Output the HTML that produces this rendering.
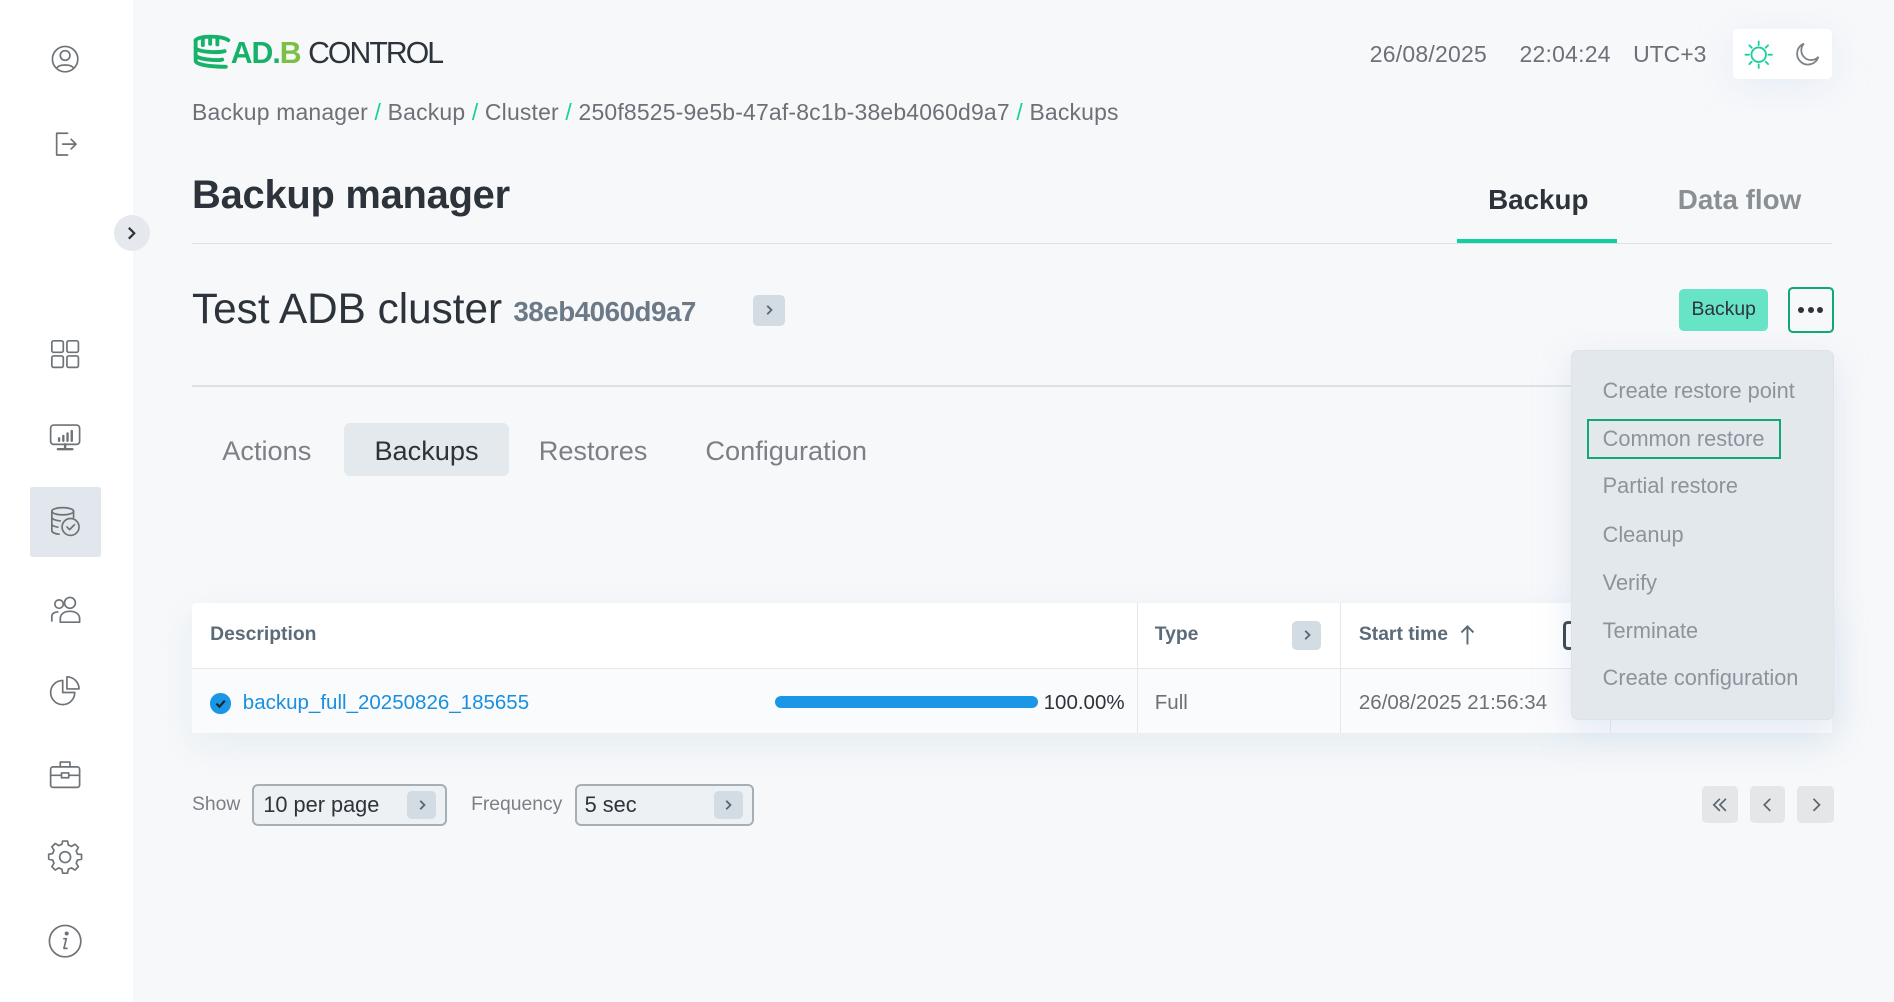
<!DOCTYPE html>
<html><head><meta charset="utf-8">
<style>
*{box-sizing:border-box;margin:0;padding:0}
html,body{width:1894px;height:1002px;overflow:hidden;background:#f7f8fa}
#w{width:1568px;height:830px;zoom:1.2079;position:relative;font-family:"Liberation Sans",sans-serif;background:#f7f8fa;overflow:hidden}
.a{position:absolute;white-space:nowrap}
.side{left:0;top:0;width:110px;height:830px;background:#fff}
.ic{position:absolute;left:39px;width:30px;height:30px}
.ic svg{width:30px;height:30px;fill:none;stroke:#6e7378;stroke-width:1.4;stroke-linecap:round;stroke-linejoin:round}
.gray{color:#6b7177}
.chev{background:#d3dce3;border-radius:4px;display:flex;align-items:center;justify-content:center}
.chev svg{width:10px;height:10px;fill:none;stroke:#5a6570;stroke-width:1.5}
.mi{position:absolute;left:25px;font-size:18px;color:#8b949c}
</style></head><body><div id="w">
<div class="a side"></div>
<div class="ic" style="top:34px"><svg viewBox="0 0 30 30"><circle cx="15" cy="15" r="10.5"/><circle cx="15" cy="12" r="4"/><path d="M8 22.5c2-3.5 12-3.5 14 0"/></svg></div>
<div class="ic" style="top:104px"><svg viewBox="0 0 30 30"><path d="M17 6H8v18h9M8 6v18M13 15h11M20 11l4 4-4 4"/></svg></div>
<div class="a" style="left:94px;top:178px;width:30px;height:30px;border-radius:50%;background:#e5e9ee;display:flex;align-items:center;justify-content:center"><svg width="12" height="12" viewBox="0 0 12 12"><path d="M4 1.5l4.5 4.5L4 10.5" fill="none" stroke="#2c333a" stroke-width="1.8"/></svg></div>
<div class="ic" style="top:278px"><svg viewBox="0 0 30 30"><rect x="4" y="4" width="9.5" height="9.5" rx="1.5"/><rect x="16.5" y="4" width="9.5" height="9.5" rx="1.5"/><rect x="4" y="16.5" width="9.5" height="9.5" rx="1.5"/><rect x="16.5" y="16.5" width="9.5" height="9.5" rx="1.5"/></svg></div>
<div class="ic" style="top:347px"><svg viewBox="0 0 30 30"><rect x="3" y="5" width="24" height="16" rx="2.5"/><path d="M9 25h12M15 21v4M10 18v-2M13.5 18v-4M17 18v-6M20.5 18v-8" stroke-width="2"/></svg></div>
<div class="a" style="left:25px;top:403px;width:59px;height:58px;background:#e1e7ec;border-radius:2px"></div>
<div class="ic" style="top:417px"><svg viewBox="0 0 30 30"><ellipse cx="13" cy="6" rx="9" ry="3"/><path d="M4 6v16c0 1.5 2.5 2.6 6 3M22 6v5M4 11c0 1.5 3 2.7 7 3M4 16.5c0 1.2 2 2.2 5 2.7"/><circle cx="19.5" cy="19" r="7"/><path d="M16.5 19l2.2 2.2 4-4"/></svg></div>
<div class="ic" style="top:490px"><svg viewBox="0 0 30 30"><circle cx="10" cy="10" r="3.5"/><circle cx="19" cy="9" r="4.5"/><path d="M4 24v-4c0-2 2-3.5 5-3.5M11 25v-3c0-4 3.5-6 8-6s8 2 8 6v3z"/></svg></div>
<div class="ic" style="top:556px"><svg viewBox="0 0 30 30"><path d="M13 7a10 10 0 1 0 10 10H13z"/><path d="M16.5 4v10h10A10 10 0 0 0 16.5 4z"/></svg></div>
<div class="ic" style="top:626px"><svg viewBox="0 0 30 30"><rect x="3" y="9" width="24" height="17" rx="2"/><path d="M11 9V5h8v4M3 16h24"/><rect x="12" y="14" width="6" height="4" fill="#fff"/></svg></div>
<div class="ic" style="top:695px"><svg viewBox="0 0 30 30"><path d="M13 3h4l.7 3.3 2.6 1.1 2.9-1.8 2.8 2.8-1.8 2.9 1.1 2.6L28.6 14v4l-3.3.7-1.1 2.6 1.8 2.9-2.8 2.8-2.9-1.8-2.6 1.1L17 29.6h-4l-.7-3.3-2.6-1.1-2.9 1.8-2.8-2.8 1.8-2.9-1.1-2.6L1.4 18v-4l3.3-.7 1.1-2.6-1.8-2.9 2.8-2.8 2.9 1.8 2.6-1.1z" transform="translate(0 -1.3)"/><circle cx="15" cy="15" r="4.5"/></svg></div>
<div class="ic" style="top:764px"><svg viewBox="0 0 30 30"><circle cx="15" cy="15" r="13"/><circle cx="16.3" cy="8.7" r="1" fill="#6e7378"/><path d="M14 13h2l-2 8h2.5"/></svg></div>

<svg class="a" style="left:159px;top:27px" width="36" height="32" viewBox="0 0 36 32"><g fill="none" stroke="#17b26a" stroke-width="3.2" stroke-linecap="round"><path d="M3 6c3-4 22-4 27 0"/><path d="M3 6v17c0 5 25 5 25 5"/><path d="M3 12c0 4 20 4.5 24 3M3 18c0 4 18 5 22 4"/><path d="M9 5v5M15 4v5M21 4.5v5"/></g></svg>
<div class="a" style="left:191px;top:31px;font-size:25px;font-weight:bold;letter-spacing:-0.8px"><span style="color:#17b26a">AD.</span><span style="color:#7bc043">B</span> <span style="color:#2c333a;font-weight:normal;letter-spacing:-1.6px">CONTROL</span></div>

<div class="a gray" style="left:1134px;top:34px;font-size:19px;letter-spacing:0.2px">26/08/2025</div>
<div class="a gray" style="left:1258px;top:34px;font-size:19px;letter-spacing:0.2px">22:04:24</div>
<div class="a gray" style="left:1352px;top:34px;font-size:19px">UTC+3</div>
<div class="a" style="left:1435px;top:24px;width:82px;height:41px;background:#fff;border-radius:4px;box-shadow:0 6px 30px rgba(200,215,240,.35)"></div>
<svg class="a" style="left:1443px;top:32px" width="26" height="26" viewBox="0 0 26 26"><g stroke="#15d19f" stroke-width="1.5" fill="none" stroke-linecap="round"><circle cx="13" cy="13" r="6"/><path d="M13 2v3M13 21v3M2 13h3M21 13h3M5.2 5.2l2 2M18.8 18.8l2 2M5.2 20.8l2-2M18.8 7.2l2-2"/></g></svg>
<svg class="a" style="left:1484px;top:33px" width="24" height="24" viewBox="0 0 24 24"><path d="M9 3a9 9 0 1 0 12 11A8 8 0 0 1 9 3z" fill="none" stroke="#7d8288" stroke-width="1.5"/></svg>

<div class="a gray" style="left:159px;top:82px;font-size:19px;letter-spacing:0.15px">Backup manager <span style="color:#15d19f">/</span> Backup <span style="color:#15d19f">/</span> Cluster <span style="color:#15d19f">/</span> 250f8525-9e5b-47af-8c1b-38eb4060d9a7 <span style="color:#15d19f">/</span> Backups</div>

<div class="a" style="left:159px;top:143px;font-size:33px;font-weight:bold;color:#2c333a;letter-spacing:-0.2px">Backup manager</div>
<div class="a" style="left:1232px;top:152px;font-size:23px;font-weight:bold;color:#2c333a">Backup</div>
<div class="a" style="left:1389px;top:152px;font-size:23px;font-weight:bold;color:#8a8f94">Data flow</div>
<div class="a" style="left:159px;top:201px;width:1358px;height:1px;background:#dde1e5"></div>
<div class="a" style="left:1206px;top:198px;width:133px;height:3px;background:#10cfa0"></div>

<div class="a" style="left:159px;top:236px;font-size:35px;color:#2c333a;letter-spacing:0px">Test ADB cluster</div>
<div class="a" style="left:425px;top:245px;font-size:23px;font-weight:bold;color:#6c7a87;letter-spacing:-0.4px">38eb4060d9a7</div>
<div class="a chev" style="left:623px;top:244px;width:27px;height:26px"><svg viewBox="0 0 10 10"><path d="M3.5 1.5L7 5 3.5 8.5"/></svg></div>
<div class="a" style="left:1390px;top:239px;width:74px;height:35px;background:#67e4c6;border-radius:4px;font-size:16px;color:#2c333a;display:flex;align-items:center;justify-content:center">Backup</div>
<div class="a" style="left:1480px;top:238px;width:38px;height:38px;border:2px solid #10a874;border-radius:4px;display:flex;align-items:center;justify-content:center;gap:3px"><i style="width:5px;height:5px;border-radius:50%;background:#2c333a"></i><i style="width:5px;height:5px;border-radius:50%;background:#2c333a"></i><i style="width:5px;height:5px;border-radius:50%;background:#2c333a"></i></div>
<div class="a" style="left:159px;top:319px;width:1358px;height:1px;background:#dde1e5"></div>

<div class="a" style="left:285px;top:350px;width:136px;height:44px;background:#e3e9ec;border-radius:5px"></div>
<div class="a" style="left:184px;top:360px;font-size:22.5px;color:#7b8086">Actions</div>
<div class="a" style="left:310px;top:360px;font-size:22.5px;color:#2c333a">Backups</div>
<div class="a" style="left:446px;top:360px;font-size:22.5px;color:#7b8086">Restores</div>
<div class="a" style="left:584px;top:360px;font-size:22.5px;color:#7b8086">Configuration</div>

<div class="a" style="left:159px;top:499px;width:1358px;height:108px;background:#fff;border-radius:4px;box-shadow:0 10px 30px rgba(190,215,225,.3)"></div>
<div class="a" style="left:159px;top:553px;width:1358px;height:54px;background:#fafbfc"></div>
<div class="a" style="left:159px;top:553px;width:1358px;height:1px;background:#e4e8ec"></div>
<div class="a" style="left:941px;top:499px;width:1px;height:108px;background:#e4e8ec"></div>
<div class="a" style="left:1109px;top:499px;width:1px;height:108px;background:#e4e8ec"></div>
<div class="a" style="left:1333px;top:499px;width:1px;height:108px;background:#e4e8ec"></div>
<div class="a" style="left:174px;top:517px;font-size:16px;font-weight:bold;color:#5c6b78">Description</div>
<div class="a" style="left:956px;top:517px;font-size:16px;font-weight:bold;color:#5c6b78">Type</div>
<div class="a chev" style="left:1070px;top:514px;width:24px;height:24px"><svg viewBox="0 0 10 10"><path d="M3.5 1.5L7 5 3.5 8.5"/></svg></div>
<div class="a" style="left:1125px;top:517px;font-size:16px;font-weight:bold;color:#5c6b78">Start time</div>
<svg class="a" style="left:1208px;top:517px" width="14" height="18" viewBox="0 0 14 18"><path d="M7 17V2M2 7l5-5 5 5" fill="none" stroke="#5c6b78" stroke-width="1.6"/></svg>
<div class="a" style="left:1294px;top:514px;width:12px;height:24px;border:2.5px solid #2c3a44;border-right:none;border-radius:4px 0 0 4px"></div>
<div class="a" style="left:174px;top:574px;width:17px;height:17px;border-radius:50%;background:#1a96e6"></div>
<svg class="a" style="left:177px;top:577px" width="11" height="11" viewBox="0 0 11 11"><path d="M2 5.5l2.5 2.5 4.5-5" fill="none" stroke="#1c2630" stroke-width="1.8"/></svg>
<div class="a" style="left:201px;top:572px;font-size:17px;color:#1a8fe0">backup_full_20250826_185655</div>
<div class="a" style="left:642px;top:576px;width:217px;height:10px;background:#1a96e6;border-radius:5px"></div>
<div class="a" style="left:864px;top:572px;font-size:17px;color:#2c333a">100.00%</div>
<div class="a" style="left:956px;top:572px;font-size:17px;color:#6b7177">Full</div>
<div class="a" style="left:1125px;top:572px;font-size:17px;color:#6b7177">26/08/2025 21:56:34</div>

<div class="a" style="left:1301px;top:290px;width:217px;height:306px;background:#e3e8ec;border-radius:6px;box-shadow:0 8px 30px rgba(180,200,230,.35);border:1px solid #dde3e8">
<div class="mi" style="top:22px">Create restore point</div>
<div style="position:absolute;left:12px;top:56px;width:161px;height:33px;border:2px solid #10a874"></div>
<div class="mi" style="top:62px">Common restore</div>
<div class="mi" style="top:101px">Partial restore</div>
<div class="mi" style="top:141px">Cleanup</div>
<div class="mi" style="top:181px">Verify</div>
<div class="mi" style="top:221px">Terminate</div>
<div class="mi" style="top:260px">Create configuration</div>
</div>

<div class="a" style="left:159px;top:657px;font-size:16px;color:#7b8086">Show</div>
<div class="a" style="left:209px;top:649px;width:161px;height:35px;border:2px solid #a6afb5;border-radius:5px;background:#eef1f4"></div>
<div class="a" style="left:218px;top:656px;font-size:18px;color:#2c333a">10 per page</div>
<div class="a chev" style="left:337px;top:655px;width:24px;height:23px"><svg viewBox="0 0 10 10"><path d="M3.5 1.5L7 5 3.5 8.5"/></svg></div>
<div class="a" style="left:390px;top:657px;font-size:16px;color:#7b8086">Frequency</div>
<div class="a" style="left:476px;top:649px;width:148px;height:35px;border:2px solid #a6afb5;border-radius:5px;background:#eef1f4"></div>
<div class="a" style="left:484px;top:656px;font-size:18px;color:#2c333a">5 sec</div>
<div class="a chev" style="left:591px;top:655px;width:24px;height:23px"><svg viewBox="0 0 10 10"><path d="M3.5 1.5L7 5 3.5 8.5"/></svg></div>

<div class="a" style="left:1409px;top:651px;width:30px;height:30px;background:#e4e6e8;border-radius:4px"></div>
<svg class="a" style="left:1415px;top:657px" width="18" height="18" viewBox="0 0 18 18"><path d="M9 4L4 9l5 5M14 4L9 9l5 5" fill="none" stroke="#5a6570" stroke-width="1.4"/></svg>
<div class="a" style="left:1449px;top:651px;width:29px;height:30px;background:#e4e6e8;border-radius:4px"></div>
<svg class="a" style="left:1455px;top:657px" width="18" height="18" viewBox="0 0 18 18"><path d="M11 4L6 9l5 5" fill="none" stroke="#5a6570" stroke-width="1.4"/></svg>
<div class="a" style="left:1488px;top:651px;width:30px;height:30px;background:#e4e6e8;border-radius:4px"></div>
<svg class="a" style="left:1494px;top:657px" width="18" height="18" viewBox="0 0 18 18"><path d="M7 4l5 5-5 5" fill="none" stroke="#5a6570" stroke-width="1.4"/></svg>
</div></body></html>
